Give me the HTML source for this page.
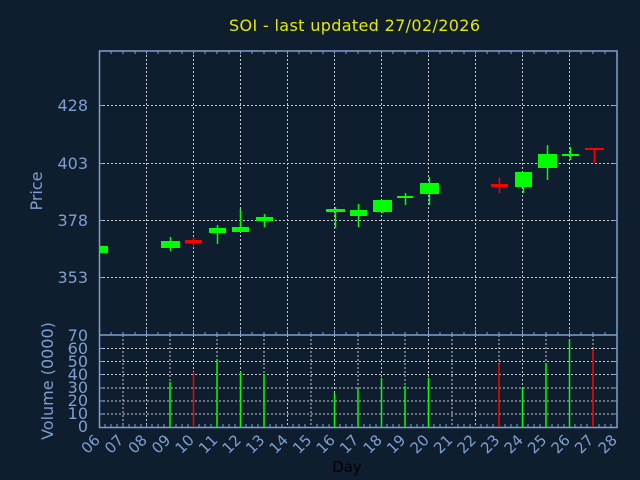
<!DOCTYPE html>
<html><head><meta charset="utf-8"><style>
html,body{margin:0;padding:0;background:#0f1e2f;}
svg{display:block;font-family:"DejaVu Sans","Liberation Sans",sans-serif;}
</style></head><body>
<svg width="640" height="480" viewBox="0 0 640 480" xmlns="http://www.w3.org/2000/svg">
<rect width="640" height="480" fill="#0f1e2f"/>
<text x="229" y="31" fill="#e8e800" font-size="16" textLength="251">SOI - last updated 27/02/2026</text>
<g stroke="#c8c8c8" stroke-width="1" stroke-dasharray="2,2" fill="none">
<path d="M99 105.5H616M99 163.5H616M99 220.5H616M99 277.5H616"/>
<path d="M146.5 51V335M193.5 51V335M240.5 51V335M287.5 51V335M334.5 51V335M381.5 51V335M428.5 51V335M475.5 51V335M522.5 51V335M569.5 51V335"/>
<path d="M99 414H616M99 401H616M99 388H616M99 374.5H616M99 361.5H616M99 348.5H616"/>
<path d="M123 335V427M146.5 335V427M170 335V427M193.5 335V427M217 335V427M240.5 335V427M264 335V427M287.5 335V427M311 335V427M334.5 335V427M358 335V427M381.5 335V427M405 335V427M428.5 335V427M452 335V427M475.5 335V427M499 335V427M522.5 335V427M546 335V427M569.5 335V427M593 335V427"/>
</g>
<g stroke="#7e9fcf" stroke-width="1.5" fill="none">
<path d="M99.5 51H617V427.5H99.5Z"/>
<path d="M99 335H617"/>
</g>
<g stroke="#7e9fcf" stroke-width="1">
<path d="M111 51v3M123 51v3M135 51v3M146.5 51v3M158 51v3M170 51v3M182 51v3M193.5 51v3M205 51v3M217 51v3M229 51v3M240.5 51v3M252 51v3M264 51v3M276 51v3M287.5 51v3M299 51v3M311 51v3M323 51v3M334.5 51v3M346 51v3M358 51v3M370 51v3M381.5 51v3M393 51v3M405 51v3M417 51v3M428.5 51v3M440 51v3M452 51v3M464 51v3M475.5 51v3M487 51v3M499 51v3M511 51v3M522.5 51v3M534 51v3M546 51v3M558 51v3M569.5 51v3M581 51v3M593 51v3M605 51v3"/>
<path d="M111 335v-3M123 335v-3M135 335v-3M146.5 335v-5M158 335v-3M170 335v-3M182 335v-3M193.5 335v-5M205 335v-3M217 335v-3M229 335v-3M240.5 335v-5M252 335v-3M264 335v-3M276 335v-3M287.5 335v-5M299 335v-3M311 335v-3M323 335v-3M334.5 335v-5M346 335v-3M358 335v-3M370 335v-3M381.5 335v-5M393 335v-3M405 335v-3M417 335v-3M428.5 335v-5M440 335v-3M452 335v-3M464 335v-3M475.5 335v-5M487 335v-3M499 335v-3M511 335v-3M522.5 335v-5M534 335v-3M546 335v-3M558 335v-3M569.5 335v-5M581 335v-3M593 335v-3M605 335v-3"/>
<path d="M99 105.5h4M99 163.5h4M99 220.5h4M99 277.5h4M617 105.5h-4M617 163.5h-4M617 220.5h-4M617 277.5h-4"/>
<path d="M99 414h4M99 401h4M99 388h4M99 374.5h4M99 361.5h4M99 348.5h4M617 414h-4M617 401h-4M617 388h-4M617 374.5h-4M617 361.5h-4M617 348.5h-4"/>
<path d="M105 427v-3M111 427v-3M117 427v-3M123 427v-3M129 427v-3M135 427v-3M141 427v-3M146.5 427v-3M152 427v-3M158 427v-3M164 427v-3M176 427v-3M182 427v-3M188 427v-3M199 427v-3M205 427v-3M211 427v-3M223 427v-3M229 427v-3M235 427v-3M246 427v-3M252 427v-3M258 427v-3M270 427v-3M276 427v-3M282 427v-3M293 427v-3M299 427v-3M305 427v-3M317 427v-3M323 427v-3M329 427v-3M340 427v-3M346 427v-3M352 427v-3M364 427v-3M370 427v-3M376 427v-3M387 427v-3M393 427v-3M399 427v-3M411 427v-3M417 427v-3M423 427v-3M434 427v-3M440 427v-3M446 427v-3M458 427v-3M464 427v-3M470 427v-3M481 427v-3M487 427v-3M493 427v-3M505 427v-3M511 427v-3M517 427v-3M528 427v-3M534 427v-3M540 427v-3M552 427v-3M558 427v-3M564 427v-3M575 427v-3M581 427v-3M587 427v-3M599 427v-3M605 427v-3M611 427v-3"/>
</g>
<!-- candles -->
<g stroke-width="1.5">
<rect x="99" y="246" width="9" height="7" fill="#00ff00"/>
<path d="M170.5 237V251" stroke="#00ff00"/><rect x="161" y="241" width="19" height="7" fill="#00ff00"/>
<rect x="185" y="240" width="17" height="3.5" fill="#ff0000"/><path d="M193.5 238V246" stroke="#ff0000"/>
<path d="M217.5 225V244" stroke="#00ff00"/><rect x="209" y="228" width="17" height="5" fill="#00ff00"/>
<path d="M240.5 209V232" stroke="#00ff00"/><rect x="232" y="227" width="17" height="5" fill="#00ff00"/>
<path d="M264.5 214V227" stroke="#00ff00"/><rect x="256" y="217" width="17" height="4" fill="#00ff00"/>
<path d="M335.5 207V228" stroke="#00ff00"/><rect x="326" y="209" width="19" height="3" fill="#00ff00"/>
<path d="M358.5 204V227" stroke="#00ff00"/><rect x="350" y="210" width="17" height="6" fill="#00ff00"/>
<path d="M382.5 200V213" stroke="#00ff00"/><rect x="373" y="200" width="19" height="12" fill="#00ff00"/>
<path d="M405.5 193V205" stroke="#00ff00"/><rect x="397" y="196" width="16" height="2" fill="#00ff00"/>
<path d="M429.5 177V205" stroke="#00ff00"/><rect x="420" y="183" width="19" height="11" fill="#00ff00"/>
<path d="M499.5 178V193" stroke="#ff0000"/><rect x="491" y="184" width="17" height="3" fill="#ff0000"/>
<path d="M523.5 172V193" stroke="#00ff00"/><rect x="515" y="172" width="17" height="15" fill="#00ff00"/>
<path d="M547.5 145V180" stroke="#00ff00"/><rect x="538" y="154" width="19" height="14" fill="#00ff00"/>
<path d="M570.5 147V160" stroke="#00ff00"/><rect x="562" y="154" width="17" height="2" fill="#00ff00"/>
<path d="M594.5 148V163" stroke="#ff0000"/><rect x="585" y="148" width="19" height="2" fill="#ff0000"/>
</g>
<!-- volume -->
<g stroke-width="1.5">
<path d="M170 427V382" stroke="#00ff00"/>
<path d="M193.5 427V372" stroke="#ff0000"/>
<path d="M217 427V359" stroke="#00ff00"/>
<path d="M240.5 427V372" stroke="#00ff00"/>
<path d="M264 427V374" stroke="#00ff00"/>
<path d="M334.5 427V393" stroke="#00ff00"/>
<path d="M358 427V389" stroke="#00ff00"/>
<path d="M381.5 427V378" stroke="#00ff00"/>
<path d="M405 427V386" stroke="#00ff00"/>
<path d="M428.5 427V378" stroke="#00ff00"/>
<path d="M499 427V364" stroke="#ff0000"/>
<path d="M522.5 427V388" stroke="#00ff00"/>
<path d="M546 427V363" stroke="#00ff00"/>
<path d="M569.5 427V339" stroke="#00ff00"/>
<path d="M593 427V349" stroke="#ff0000"/>
</g>
<g fill="#7e9fcf" font-size="16" text-anchor="end">
<text x="88" y="111">428</text><text x="88" y="169">403</text><text x="88" y="226">378</text><text x="88" y="283">353</text>
<text x="88" y="432">0</text><text x="88" y="419">10</text><text x="88" y="406">20</text><text x="88" y="393">30</text><text x="88" y="380">40</text><text x="88" y="367">50</text><text x="88" y="354">60</text><text x="88" y="341">70</text>
</g>
<g fill="#7e9fcf" font-size="16" text-anchor="middle">
<text transform="translate(42,191) rotate(-90)">Price</text>
<text transform="translate(53,381) rotate(-90)">Volume (0000)</text>
</g>
<g fill="#7e9fcf" font-size="15" text-anchor="end">
<text transform="translate(101,441) rotate(-45)">06</text>
<text transform="translate(124.5,441) rotate(-45)">07</text>
<text transform="translate(148,441) rotate(-45)">08</text>
<text transform="translate(171.5,441) rotate(-45)">09</text>
<text transform="translate(195,441) rotate(-45)">10</text>
<text transform="translate(218.5,441) rotate(-45)">11</text>
<text transform="translate(242,441) rotate(-45)">12</text>
<text transform="translate(265.5,441) rotate(-45)">13</text>
<text transform="translate(289,441) rotate(-45)">14</text>
<text transform="translate(312.5,441) rotate(-45)">15</text>
<text transform="translate(336,441) rotate(-45)">16</text>
<text transform="translate(359.5,441) rotate(-45)">17</text>
<text transform="translate(383,441) rotate(-45)">18</text>
<text transform="translate(406.5,441) rotate(-45)">19</text>
<text transform="translate(430,441) rotate(-45)">20</text>
<text transform="translate(453.5,441) rotate(-45)">21</text>
<text transform="translate(477,441) rotate(-45)">22</text>
<text transform="translate(500.5,441) rotate(-45)">23</text>
<text transform="translate(524,441) rotate(-45)">24</text>
<text transform="translate(547.5,441) rotate(-45)">25</text>
<text transform="translate(571,441) rotate(-45)">26</text>
<text transform="translate(594.5,441) rotate(-45)">27</text>
<text transform="translate(618,441) rotate(-45)">28</text>
</g>
<text x="347" y="472" fill="#000000" font-size="15" text-anchor="middle">Day</text>
</svg>
</body></html>
